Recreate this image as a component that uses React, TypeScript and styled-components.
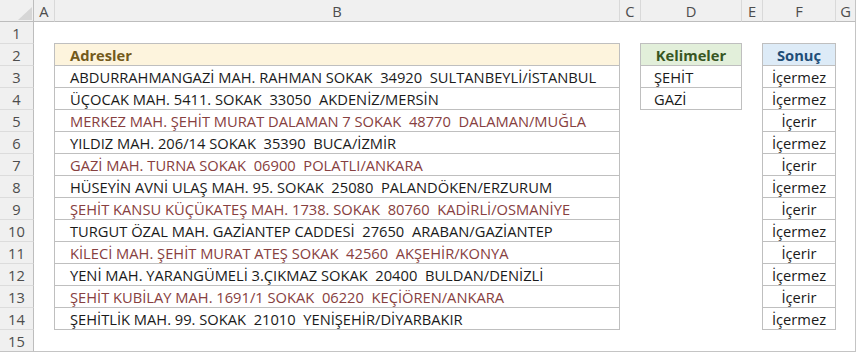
import React from "react";
import styled, { createGlobalStyle } from "styled-components";

const GlobalStyle = createGlobalStyle`
  html, body {
    margin: 0;
    padding: 0;
    background: #ffffff;
  }
  body {
    font-family: "Open Sans", "Noto Sans", sans-serif;
  }
`;

// row header, A, B, C, D, E, F, G (each track ends with its gridline pixel)
const COLUMNS = "34px 21px 565px 21px 101px 21px 73px 20px";
const COL_LETTERS = ["A", "B", "C", "D", "E", "F", "G"];

const Sheet = styled.div`
  width: 856px;
  height: 352px;
  display: flex;
  flex-direction: column;
  background: #ffffff;
  overflow: hidden;
`;

const Row = styled.div`
  display: grid;
  grid-template-columns: ${COLUMNS};
  grid-template-rows: 22px;
  flex: 0 0 22px;
  & > * {
    box-sizing: border-box;
  }
  & > *:last-child {
    border-right: 1px solid #c4c4c4;
  }
  &:last-child > * {
    border-bottom: 1px solid #c4c4c4;
  }
`;

const Corner = styled.div`
  background: #f0f0f0;
  border-right: 1px solid #bdbdbd;
  border-bottom: 1px solid #bdbdbd;
  display: flex;
  align-items: flex-end;
  justify-content: flex-end;
  padding: 0 1px 1px 0;
`;

const ColHead = styled.div`
  background: #f0f0f0;
  border-right: 1px solid #d9d9d9;
  border-bottom: 1px solid #bdbdbd;
  display: flex;
  align-items: center;
  justify-content: center;
  font-size: 14.7px;
  color: #4d4d4d;
`;

const RowNum = styled.div`
  background: #f0f0f0;
  border-right: 1px solid #bdbdbd;
  border-bottom: 1px solid #dcdcdc;
  display: flex;
  align-items: center;
  justify-content: center;
  font-size: 14.7px;
  color: #4d4d4d;
`;

const Blank = styled.div``;

type Tone = "gold" | "green" | "blue";

const TONES: Record<Tone, { fill: string; text: string }> = {
  gold: { fill: "#fdf4dd", text: "#735a1c" },
  green: { fill: "#e2efda", text: "#375623" },
  blue: { fill: "#ddebf7", text: "#1f4e78" },
};

const Cell = styled.div<{ $center?: boolean; $indent?: number; $color?: string }>`
  margin: -1px 0 0 -1px;
  border: 1px solid #bfbfbf;
  background: #ffffff;
  display: flex;
  align-items: center;
  justify-content: ${(p) => (p.$center ? "center" : "flex-start")};
  padding-left: ${(p) => (p.$center ? 0 : p.$indent ?? 15)}px;
  white-space: pre;
  font-size: 14.7px;
  color: ${(p) => p.$color ?? "#1a1a1a"};
  overflow: hidden;
`;

const HeadCell = styled(Cell)<{ $tone: Tone }>`
  background: ${(p) => TONES[p.$tone].fill};
  color: ${(p) => TONES[p.$tone].text};
  font-weight: 700;
`;

type Address = { text: string; hit: boolean; result: string };

const ADDRESSES: Address[] = [
  { text: "ABDURRAHMANGAZİ MAH. RAHMAN SOKAK  34920  SULTANBEYLİ/İSTANBUL", hit: false, result: "İçermez" },
  { text: "ÜÇOCAK MAH. 5411. SOKAK  33050  AKDENİZ/MERSİN", hit: false, result: "İçermez" },
  { text: "MERKEZ MAH. ŞEHİT MURAT DALAMAN 7 SOKAK  48770  DALAMAN/MUĞLA", hit: true, result: "İçerir" },
  { text: "YILDIZ MAH. 206/14 SOKAK  35390  BUCA/İZMİR", hit: false, result: "İçermez" },
  { text: "GAZİ MAH. TURNA SOKAK  06900  POLATLI/ANKARA", hit: true, result: "İçerir" },
  { text: "HÜSEYİN AVNİ ULAŞ MAH. 95. SOKAK  25080  PALANDÖKEN/ERZURUM", hit: false, result: "İçermez" },
  { text: "ŞEHİT KANSU KÜÇÜKATEŞ MAH. 1738. SOKAK  80760  KADİRLİ/OSMANİYE", hit: true, result: "İçerir" },
  { text: "TURGUT ÖZAL MAH. GAZİANTEP CADDESİ  27650  ARABAN/GAZİANTEP", hit: false, result: "İçermez" },
  { text: "KİLECİ MAH. ŞEHİT MURAT ATEŞ SOKAK  42560  AKŞEHİR/KONYA", hit: true, result: "İçerir" },
  { text: "YENİ MAH. YARANGÜMELİ 3.ÇIKMAZ SOKAK  20400  BULDAN/DENİZLİ", hit: false, result: "İçermez" },
  { text: "ŞEHİT KUBİLAY MAH. 1691/1 SOKAK  06220  KEÇİÖREN/ANKARA", hit: true, result: "İçerir" },
  { text: "ŞEHİTLİK MAH. 99. SOKAK  21010  YENİŞEHİR/DİYARBAKIR", hit: false, result: "İçermez" },
];

const WORDS = ["ŞEHİT", "GAZİ"];

const HIT_COLOR = "#874040";

const SelectAll = () => (
  <svg width="14" height="13" viewBox="0 0 14 13">
    <polygon points="14,0 14,13 0,13" fill="#d6d6d6" />
  </svg>
);

const App = () => {
  const bodyRows = [];
  for (let r = 1; r <= 15; r++) {
    let b: React.ReactNode = <Blank />;
    let d: React.ReactNode = <Blank />;
    let f: React.ReactNode = <Blank />;

    if (r === 2) {
      b = <HeadCell $tone="gold">Adresler</HeadCell>;
      d = (
        <HeadCell $tone="green" $center>
          Kelimeler
        </HeadCell>
      );
      f = (
        <HeadCell $tone="blue" $center>
          Sonuç
        </HeadCell>
      );
    } else if (r >= 3 && r <= 14) {
      const a = ADDRESSES[r - 3];
      b = <Cell $color={a.hit ? HIT_COLOR : undefined}>{a.text}</Cell>;
      f = <Cell $center>{a.result}</Cell>;
      if (r - 3 < WORDS.length) {
        d = <Cell $indent={13}>{WORDS[r - 3]}</Cell>;
      }
    }

    bodyRows.push(
      <Row key={r}>
        <RowNum>{r}</RowNum>
        <Blank />
        {b}
        <Blank />
        {d}
        <Blank />
        {f}
        <Blank />
      </Row>
    );
  }

  return (
    <>
      <GlobalStyle />
      <Sheet>
        <Row>
          <Corner>
            <SelectAll />
          </Corner>
          {COL_LETTERS.map((c) => (
            <ColHead key={c}>{c}</ColHead>
          ))}
        </Row>
        {bodyRows}
      </Sheet>
    </>
  );
};

export default App;
